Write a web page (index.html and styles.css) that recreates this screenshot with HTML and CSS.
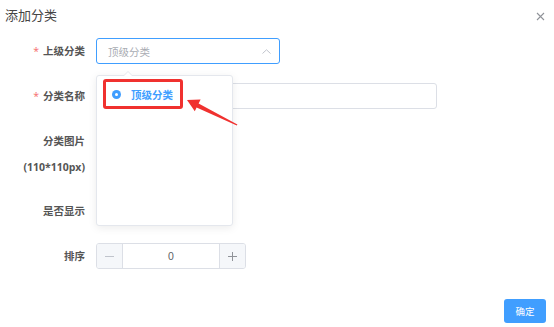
FILE: index.html
```html
<!DOCTYPE html>
<html lang="zh-CN">
<head>
    <meta charset="UTF-8">
    <meta name="viewport" content="width=device-width, initial-scale=1.0">
    <title>添加分类</title>
    <link rel="stylesheet" href="styles.css">
</head>
<body>
    <div class="dialog">
        <div class="dialog-header">
            <span class="dialog-title">添加分类</span>
            <svg class="dialog-close" width="9" height="9" viewBox="0 0 9 9">
                <path d="M1 1 L8 8 M8 1 L1 8" stroke="#909399" stroke-width="1.1" fill="none"/>
            </svg>
        </div>

        <div class="dialog-body">
            <div class="form-item">
                <label class="form-label required">上级分类</label>
                <div class="form-content">
                    <div class="select is-focus">
                        <span class="select-placeholder">顶级分类</span>
                        <svg class="select-caret" width="9" height="5" viewBox="0 0 9 5">
                            <path d="M0.5 4.5 L4.5 0.8 L8.5 4.5" stroke="#c0c4cc" stroke-width="1" fill="none"/>
                        </svg>
                    </div>
                </div>
            </div>

            <div class="form-item">
                <label class="form-label required">分类名称</label>
                <div class="form-content">
                    <div class="input"></div>
                </div>
            </div>

            <div class="form-item tall">
                <label class="form-label">分类图片<br>(110*110px)</label>
                <div class="form-content"></div>
            </div>

            <div class="form-item">
                <label class="form-label">是否显示</label>
                <div class="form-content"></div>
            </div>

            <div class="form-item last">
                <label class="form-label">排序</label>
                <div class="form-content">
                    <div class="number-input">
                        <span class="num-btn num-decrease">
                            <svg width="9" height="9" viewBox="0 0 9 9"><path d="M0 4.5 H9" stroke="#c0c4cc" stroke-width="1"/></svg>
                        </span>
                        <span class="num-value">0</span>
                        <span class="num-btn num-increase">
                            <svg width="9" height="9" viewBox="0 0 9 9"><path d="M0 4.5 H9 M4.5 0 V9" stroke="#909399" stroke-width="1"/></svg>
                        </span>
                    </div>
                </div>
            </div>
        </div>

        <div class="dialog-footer">
            <button class="btn-primary">确定</button>
        </div>

        <!-- cascader dropdown, open over the form -->
        <div class="cascader-menu">
            <div class="cascader-option marked">
                <span class="radio"></span>
                <span class="option-label">顶级分类</span>
            </div>
        </div>

        <!-- annotation arrow -->
        <svg class="mark-arrow" width="56" height="32" viewBox="184 96 56 32">
            <polygon points="187,100 200.6,99.6 198.6,103.6 237.4,124.5 236.8,125.6 196.6,107.4 194.8,111.2" fill="#f0312f"/>
        </svg>
    </div>
</body>
</html>
```

FILE: styles.css
```css
* {
    margin: 0;
    padding: 0;
    box-sizing: border-box;
}

body {
    background: #fff;
    font-family: "Liberation Sans", "Noto Sans CJK SC", sans-serif;
    color: #606266;
}

.dialog {
    position: relative;
    width: 554px;
    height: 327px;
    background: #fff;
}

.dialog-header {
    height: 38px;
    display: flex;
    justify-content: space-between;
    align-items: flex-start;
    padding: 7px 9px 0 5px;
}

.dialog-title {
    font-size: 13px;
    line-height: 18px;
    color: #454545;
}

.dialog-close {
    margin-top: 5px;
}

.form-item {
    display: flex;
    align-items: flex-start;
    margin-bottom: 18.75px;
}

.form-item.last {
    margin-bottom: 0;
}

.form-label {
    width: 86px;
    padding-right: 1px;
    text-align: right;
    font-family: "Open Sans", "Noto Sans CJK SC", sans-serif;
    font-size: 10.5px;
    font-weight: bold;
    line-height: 26px;
    color: #555;
    flex-shrink: 0;
}

.form-label.required::before {
    content: "*";
    color: #f56c6c;
    margin-right: 4px;
    font-weight: normal;
}

.form-item.tall .form-label {
    height: 52px;
}

.form-content {
    margin-left: 10px;
    min-height: 26px;
}

.select {
    width: 184px;
    height: 26px;
    border: 1px solid #dcdfe6;
    border-radius: 3px;
    display: flex;
    align-items: center;
    justify-content: space-between;
    padding: 0 8px 0 11px;
}

.select.is-focus {
    border-color: #409eff;
}

.select-placeholder {
    font-size: 10.5px;
    color: #a8abb2;
}

.input {
    width: 341px;
    height: 26px;
    border: 1px solid #dcdfe6;
    border-radius: 3px;
}

.number-input {
    width: 150px;
    height: 26px;
    border: 1px solid #dcdfe6;
    border-radius: 3px;
    display: flex;
    overflow: hidden;
}

.num-btn {
    width: 26px;
    background: #f5f7fa;
    display: flex;
    align-items: center;
    justify-content: center;
}

.num-decrease {
    border-right: 1px solid #dcdfe6;
}

.num-increase {
    border-left: 1px solid #dcdfe6;
}

.num-value {
    flex: 1;
    text-align: center;
    font-size: 10.5px;
    line-height: 24px;
    color: #606266;
}

.dialog-footer {
    display: flex;
    justify-content: flex-end;
    padding: 30px 8px 0 0;
}

.btn-primary {
    width: 42px;
    height: 24px;
    border: none;
    border-radius: 3px;
    background: #409eff;
    color: #fff;
    font-size: 9.5px;
    font-family: "Noto Sans CJK SC", sans-serif;
}

.cascader-menu {
    position: absolute;
    left: 96px;
    top: 75px;
    width: 137px;
    height: 151px;
    background: #fff;
    border: 1px solid #e4e7ed;
    border-radius: 3px;
    box-shadow: 0 2px 9px rgba(0, 0, 0, 0.08);
    padding: 3px 0 0 6px;
}

.cascader-menu::before,
.cascader-menu::after {
    content: "";
    position: absolute;
    left: 26px;
    border: 5px solid transparent;
    border-top: 0;
}

.cascader-menu::before {
    top: -5px;
    border-bottom-color: #e4e7ed;
}

.cascader-menu::after {
    top: -4px;
    border-bottom-color: #fff;
}

.cascader-option {
    display: inline-flex;
    align-items: center;
    height: 30px;
    padding: 0 7px 0 6px;
}

.cascader-option.marked {
    border: 3px solid #f0312f;
    border-radius: 3px;
}

.radio {
    width: 9px;
    height: 9px;
    border-radius: 50%;
    background: #409eff;
    position: relative;
    margin-right: 10px;
}

.radio::after {
    content: "";
    position: absolute;
    left: 3px;
    top: 3px;
    width: 3px;
    height: 3px;
    border-radius: 50%;
    background: #fff;
}

.option-label {
    font-size: 10.5px;
    font-weight: bold;
    color: #409eff;
}

.mark-arrow {
    position: absolute;
    left: 184px;
    top: 96px;
}
```
